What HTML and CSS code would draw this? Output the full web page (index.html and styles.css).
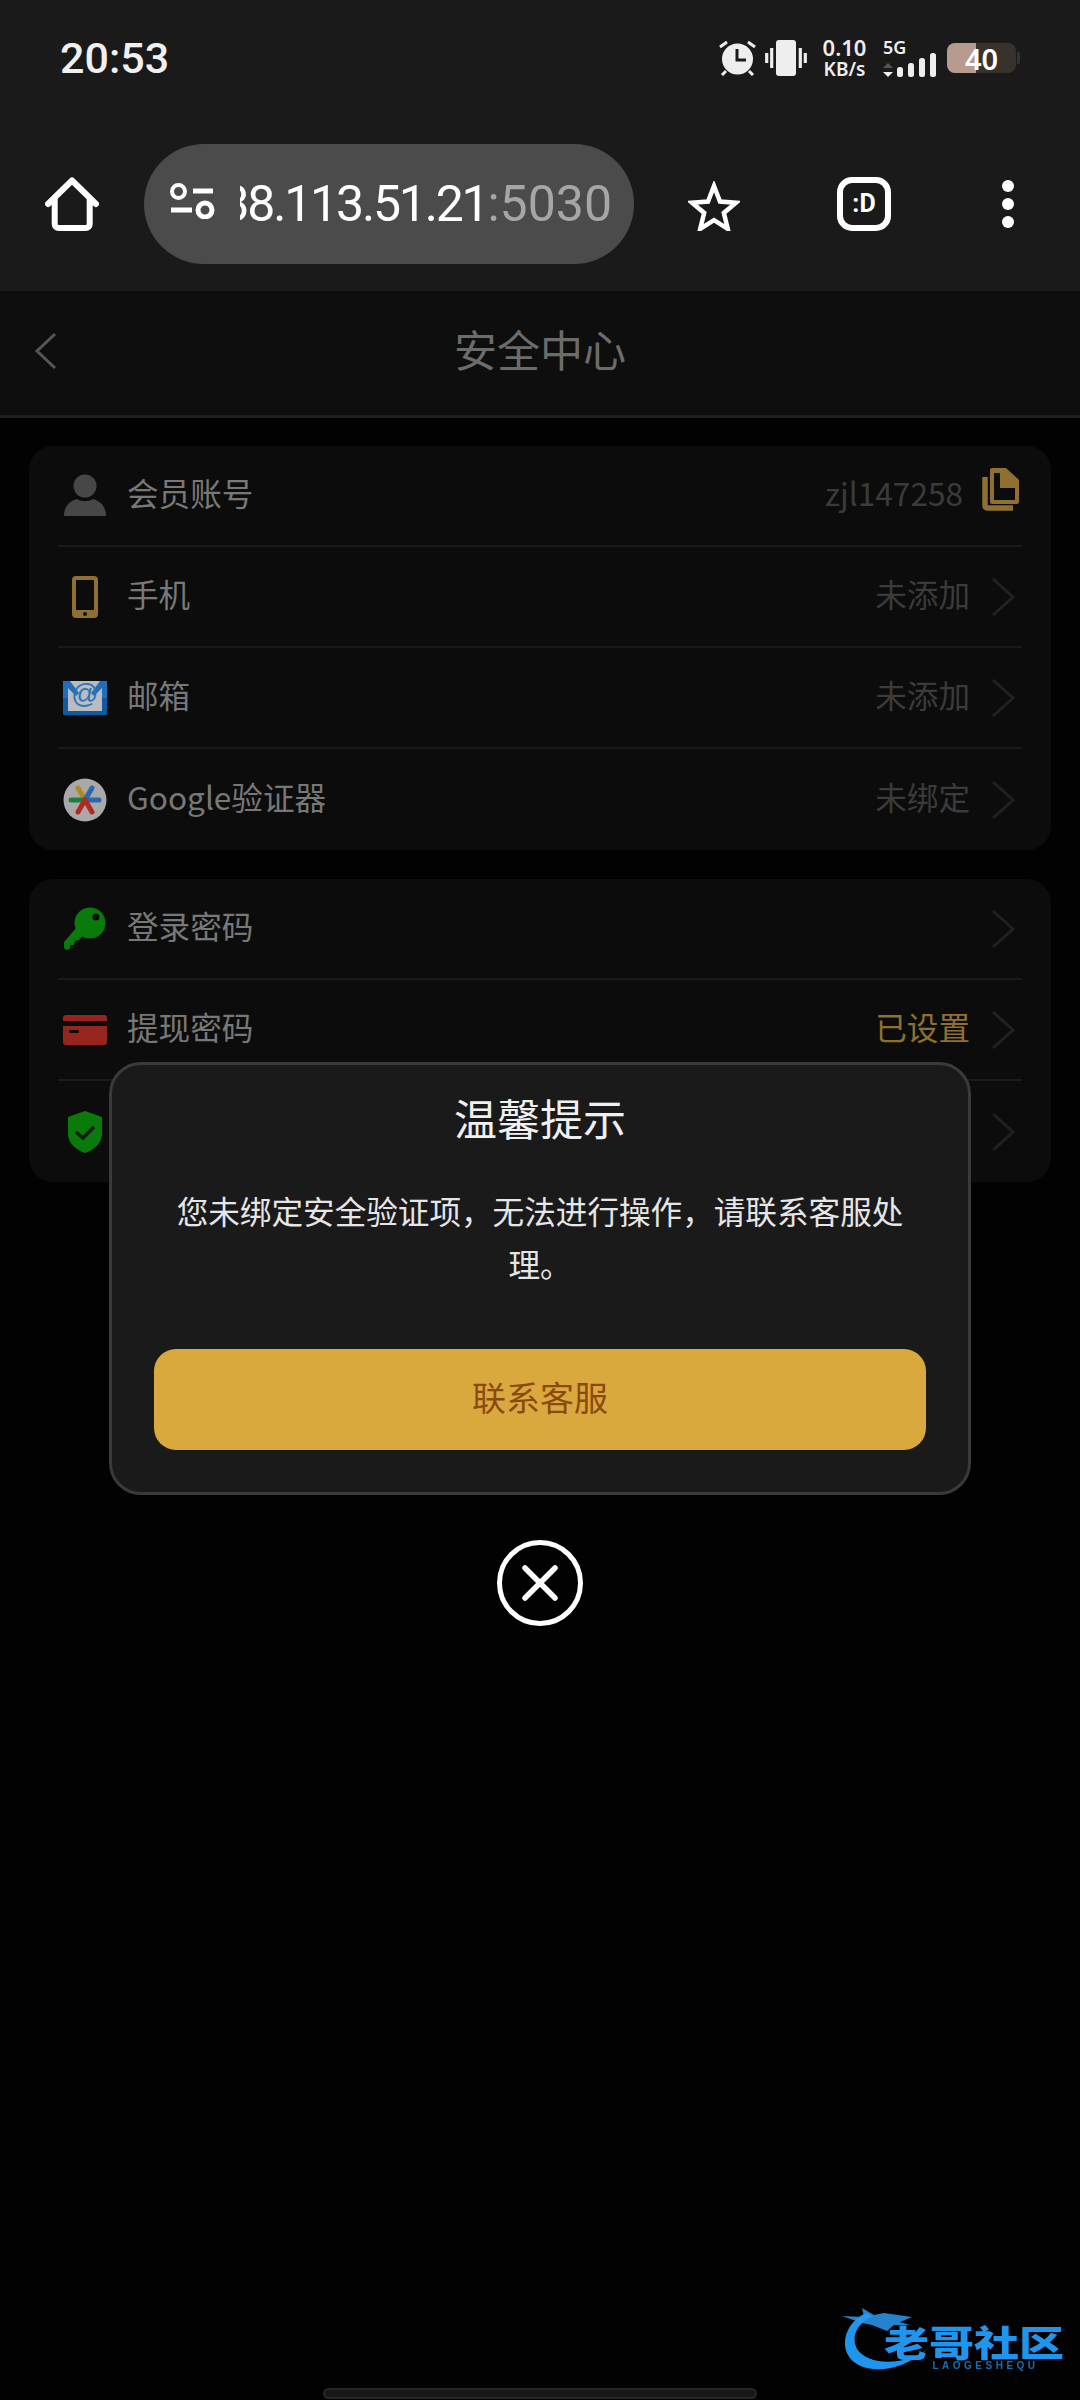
FILE: index.html
```html
<!DOCTYPE html>
<html lang="zh">
<head>
<meta charset="utf-8">
<title>安全中心</title>
<link rel="stylesheet" href="styles.css">
</head>
<body>
<div class="chrome">
  <div class="status">
    <span class="time">20:53</span>
    <div class="status-icons">
      <svg class="ic-alarm" viewBox="0 0 37 36"><circle cx="18.500" cy="19" r="15.500" fill="#eee"/><path d="M18 9v11h9" fill="none" stroke="#1a1a1a" stroke-width="3"/><path d="M1 7l7-5M36 7l-7-5M7 31l-4 4M30 31l4 4" stroke="#eee" stroke-width="3" fill="none"/></svg>
      <svg class="ic-vib" viewBox="0 0 42 36"><rect x="11" y="0" width="20" height="36" rx="3" fill="#eee"/><path d="M1.700 13v10M6.700 8v20M35.300 8v20M40.300 13v10" stroke="#eee" stroke-width="3.200"/></svg>
      <div class="speed"><span class="speed-num">0.10</span><span class="speed-unit">KB/s</span></div>
      <div class="net">
        <span class="fiveg">5G</span>
        <svg class="bars" viewBox="0 0 54 25"><path d="M5 11l5 5H0z" fill="#555"/><path d="M0 20h10l-5 5z" fill="#eee"/><rect x="14" y="15" width="6" height="10" rx="2.500" fill="#eee"/><rect x="25" y="11" width="6" height="14" rx="2.500" fill="#eee"/><rect x="36" y="6" width="6" height="19" rx="2.500" fill="#eee"/><rect x="47" y="1" width="6" height="24" rx="2.500" fill="#eee"/></svg>
      </div>
      <div class="battery"><div class="battery-fill"></div><span class="battery-num">40</span></div>
      <div class="battery-tip"></div>
    </div>
  </div>
  <div class="toolbar">
    <svg class="ic-home" viewBox="0 0 54 54"><path d="M3 27 27 3.500 51 27M9.700 21v26a4 4 0 0 0 4 4h27a4 4 0 0 0 4-4V21" fill="none" stroke="#fff" stroke-width="6" stroke-linejoin="round" stroke-linecap="round"/></svg>
    <div class="pill">
      <svg class="ic-tune" viewBox="0 0 46 36"><circle cx="8.500" cy="8.500" r="6.500" fill="none" stroke="#fff" stroke-width="4"/><path d="M23 8h20M1 27h21" stroke="#fff" stroke-width="5"/><circle cx="35" cy="27" r="7" fill="none" stroke="#fff" stroke-width="5"/></svg>
      <div class="url"><span class="url-host">38.113.51.21</span><span class="url-port">:5030</span></div>
    </div>
    <svg class="ic-star" viewBox="0 0 52 50"><path d="M26 5l6 15.500 16 1.200-12.200 10.200 4 16L26 39.200l-13.800 8.700 4-16L4 21.700l16-1.200z" fill="none" stroke="#fff" stroke-width="4.500" stroke-linejoin="miter"/></svg>
    <div class="tab-count">:D</div>
    <div class="menu-dots"><i></i><i></i><i></i></div>
  </div>
</div>

<main class="page">
  <header class="head">
    <svg class="back" viewBox="0 0 26 40"><path d="M22 3 4 20l18 17" fill="none" stroke="#565656" stroke-width="3"/></svg>
    <h1>安全中心</h1>
  </header>

  <section class="card">
    <div class="row">
      <svg class="ico" viewBox="0 0 44 44"><circle cx="22" cy="12" r="11.500" fill="#474747"/><path d="M1 42c0-10 6-15 13-17 5 3 11 3 16 0 7 2 13 7 13 17z" fill="#474747"/></svg>
      <span class="label">会员账号</span>
      <span class="value">zjl147258</span>
      <svg class="copy" viewBox="0 0 37 44"><path d="M10 1h14l13 12v22a2 2 0 0 1-2 2H10a2 2 0 0 1-2-2V3a2 2 0 0 1 2-2z" fill="#8f7030"/><path d="M12 6h6v15h15v12H12z" fill="#0c0c0c"/><path d="M3 10v29a2 2 0 0 0 2 2h26" fill="none" stroke="#8f7030" stroke-width="5.500"/></svg>
    </div>
    <div class="row">
      <svg class="ico" viewBox="0 0 44 44"><rect x="9" y="1" width="26" height="42" rx="4" fill="#8f7030"/><rect x="13" y="5" width="18" height="30" fill="#0c0c0c"/><circle cx="22" cy="39" r="2" fill="#0c0c0c"/></svg>
      <span class="label">手机</span>
      <span class="value">未添加</span>
      <svg class="chev" viewBox="0 0 24 38"><path d="M2 1l20 18L2 37" fill="none" stroke="#212121" stroke-width="3"/></svg>
    </div>
    <div class="row">
      <svg class="ico" viewBox="0 0 44 44"><rect x="0" y="5" width="44" height="34" rx="1" fill="#0f5aa0"/><path d="M5 5h34v30H5z" fill="#b9bcc0"/><path d="M0 5h7l9 12-3 3L5 12v10H0zM44 5h-7l-9 12 3 3 8-8v10h5z" fill="#1f70b8"/><text x="22" y="27" class="at">@</text></svg>
      <span class="label">邮箱</span>
      <span class="value">未添加</span>
      <svg class="chev" viewBox="0 0 24 38"><path d="M2 1l20 18L2 37" fill="none" stroke="#212121" stroke-width="3"/></svg>
    </div>
    <div class="row">
      <svg class="ico" viewBox="0 0 44 44"><circle cx="22" cy="22" r="21.500" fill="#a9a9a9"/><path d="M22 22 15 10" stroke="#b08a20" stroke-width="5" stroke-linecap="round"/><path d="M22 22l7-12" stroke="#2b68ae" stroke-width="5" stroke-linecap="round"/><path d="M22 22H8" stroke="#1f7f3e" stroke-width="5" stroke-linecap="round"/><path d="M22 22h14" stroke="#2b68ae" stroke-width="5" stroke-linecap="round"/><path d="M22 22l-7 12M22 22l7 12" stroke="#b02a22" stroke-width="5" stroke-linecap="round"/></svg>
      <span class="label">Google验证器</span>
      <span class="value">未绑定</span>
      <svg class="chev" viewBox="0 0 24 38"><path d="M2 1l20 18L2 37" fill="none" stroke="#212121" stroke-width="3"/></svg>
    </div>
  </section>

  <section class="card">
    <div class="row">
      <svg class="ico" viewBox="0 0 44 44"><circle cx="27" cy="16" r="15.500" fill="#0a7a0a"/><path d="M14 20 1 35v6l2 2 4-1 0-4 4 0 1-4 4-1 7-8z" fill="#0a7a0a"/><circle cx="33" cy="10" r="3.500" fill="#0c0c0c"/></svg>
      <span class="label">登录密码</span>
      <svg class="chev" viewBox="0 0 24 38"><path d="M2 1l20 18L2 37" fill="none" stroke="#212121" stroke-width="3"/></svg>
    </div>
    <div class="row">
      <svg class="ico" viewBox="0 0 44 44"><rect x="0" y="7" width="44" height="30" rx="3" fill="#962520"/><rect x="0" y="13" width="44" height="5" fill="#0c0c0c"/><rect x="6" y="22" width="10" height="3" rx="1.500" fill="#0c0c0c"/></svg>
      <span class="label">提现密码</span>
      <span class="value value-set">已设置</span>
      <svg class="chev" viewBox="0 0 24 38"><path d="M2 1l20 18L2 37" fill="none" stroke="#212121" stroke-width="3"/></svg>
    </div>
    <div class="row">
      <svg class="ico" viewBox="0 0 44 44"><path d="M22 1 39 7v17c0 9-8 16-17 19C13 40 5 33 5 24V7z" fill="#0a7a0a"/><path d="M13 22l7 6 11-11" fill="none" stroke="#10220f" stroke-width="3.500"/></svg>
      <span class="label">安全中心</span>
      <svg class="chev" viewBox="0 0 24 38"><path d="M2 1l20 18L2 37" fill="none" stroke="#212121" stroke-width="3"/></svg>
    </div>
  </section>
</main>

<div class="overlay">
  <div class="dialog">
    <h2>温馨提示</h2>
    <p>您未绑定安全验证项，无法进行操作，请联系客服处理。</p>
    <button class="cta">联系客服</button>
  </div>
  <svg class="close" viewBox="0 0 88 88"><circle cx="44" cy="44" r="40.500" fill="none" stroke="#fff" stroke-width="5"/><path d="M29 29l30 30M59 29 29 59" stroke="#fff" stroke-width="5.500" stroke-linecap="round"/></svg>
</div>

<div class="logo">
  <svg class="logo-mark" viewBox="0 0 90 72"><path d="M24 10C6 18-2 38 6 52c8 16 44 24 80-6C60 64 26 62 15 46 9 34 14 22 30 13z" fill="#1f95ee"/><path d="M0 13l22 1-2-9 12 7 10-2 28 4-12 5 10 3H52l-7 6-15-6-10-2z" fill="#2a9af0" opacity=".85"/></svg>
  <div class="logo-text"><span class="logo-cn">老哥社区</span><span class="logo-en">LAOGESHEQU</span></div>
</div>
<div class="home-bar"></div>
</body>
</html>
```
FILE: styles.css
```css
* { box-sizing: border-box; }
html, body { margin: 0; padding: 0; }
body {
  width: 1080px;
  height: 2400px;
  position: relative;
  overflow: hidden;
  background: #020202;
  font-family: "Noto Sans CJK SC", "Noto Sans", sans-serif;
}
.chrome { height: 291px; background: #1a1a1a; display: flex; flex-direction: column; }
.status { height: 116px; display: flex; align-items: center; justify-content: space-between; padding: 0 60px 0 60px; }
.time { font: 500 43px/1 Roboto, sans-serif; color: #f0f0f0; }
.status-icons { display: flex; align-items: center; }
.ic-alarm { width: 37px; height: 36px; margin-right: 9px; }
.ic-vib { width: 42px; height: 36px; margin-right: 16px; }
.speed { display: flex; flex-direction: column; align-items: center; width: 43px; margin-right: 17px; color: #eee; font-family: "Noto Sans", sans-serif; font-weight: 600; }
.speed-num { font-size: 22px; line-height: 23px; }
.speed-unit { font-size: 19px; line-height: 21px; }
.net { position: relative; width: 54px; height: 37px; margin-right: 10px; }
.fiveg { position: absolute; left: 0; top: -3px; font: 600 18px/20px "Noto Sans", sans-serif; color: #eee; }
.bars { position: absolute; left: 0; bottom: 0; width: 54px; height: 25px; }
.battery { position: relative; width: 69px; height: 30px; border-radius: 8px; background: #37332c; overflow: hidden; display: flex; align-items: center; justify-content: center; }
.battery-fill { position: absolute; left: 0; top: 0; bottom: 0; width: 29px; background: #b69b8e; }
.battery-num { position: relative; font: 600 29px/1 "Noto Sans", sans-serif; color: #fff; }
.battery-tip { width: 3px; height: 12px; margin-left: 1px; background: #333; border-radius: 0 2px 2px 0; }
.toolbar { height: 120px; margin-top: 28px; display: flex; align-items: center; padding-left: 45px; }
.ic-home { width: 54px; height: 54px; flex: none; }
.pill { width: 490px; height: 120px; margin-left: 45px; border-radius: 60px; background: #4b4b4b; display: flex; align-items: center; padding: 0 23px 0 26px; flex: none; }
.ic-tune { width: 46px; height: 36px; flex: none; margin-top: -6px; }
.url { width: 372px; flex: none; overflow: hidden; margin-left: 24px; display: flex; justify-content: flex-end; font: 400 50px/60px Roboto, sans-serif; white-space: nowrap; }
.url-host { color: #fff; letter-spacing: -2.2px; }
.url-port { color: #a6a6a6; }
.ic-star { width: 52px; height: 50px; margin: 3px 0 0 54px; flex: none; }
.tab-count { width: 54px; height: 54px; margin-left: 97px; border: 6px solid #fff; border-radius: 15px; color: #fff; font: 700 25px/42px Roboto, sans-serif; text-align: center; flex: none; }
.menu-dots { display: flex; flex-direction: column; gap: 6px; margin-left: 111px; }
.menu-dots i { display: block; width: 12px; height: 12px; border-radius: 50%; background: #fff; }

.head { height: 127px; display: flex; align-items: center; justify-content: center; position: relative; background: #0e0e0e; border-bottom: 3px solid #1d1d1d; padding-bottom: 10px; }
.head h1 { margin: 0; font-size: 43px; font-weight: 400; color: #6c6c6c; }
.back { position: absolute; left: 33px; top: 40px; width: 26px; height: 40px; }
.card { margin: 28px 29px 0; background: #0c0c0c; border-radius: 24px; padding: 0 29px; }
.card + .card { margin-top: 29px; }
.row { height: 101px; display: flex; align-items: center; border-bottom: 2px solid #1a1a1a; }
.row:last-child { border-bottom: 0; }
.ico { width: 44px; height: 44px; margin: 0 20px 0 5px; flex: none; }
.at { font: 400 27px "Liberation Sans", sans-serif; fill: #2f74b8; text-anchor: middle; }
.label { flex: 1; font-size: 31.600px; color: #787878; padding-bottom: 7px; }
.value { font-size: 31.600px; color: #3b3b3b; padding-bottom: 7px; }
.value-set { color: #8f7030; }
.copy { width: 37px; height: 44px; margin: 0 3px 14px 19px; flex: none; }
.chev { width: 24px; height: 38px; margin: 0 7px 0 21px; flex: none; }

.overlay { position: absolute; left: 109px; top: 1062px; width: 862px; display: flex; flex-direction: column; align-items: center; }
.dialog { width: 100%; height: 433px; border: 3px solid #3a3a3a; border-radius: 32px; background: #1a1a1a; padding: 0 42px; text-align: center; }
.dialog h2 { margin: 20px 0 0; font-size: 43px; line-height: 64px; font-weight: 400; color: #f0f0f0; }
.dialog p { margin: 35px 0 0; height: 106px; font-size: 31.600px; line-height: 53px; color: #e6e6e6; padding: 0 10px; }
.cta { display: block; width: 772px; height: 101px; margin: 59px 0 0 0; padding: 0 0 6px; border: 0; border-radius: 22px; background: #d9a93d; color: #8a4a0e; font: 400 34px "Noto Sans CJK SC", sans-serif; }
.close { width: 88px; height: 88px; margin-top: 44px; }

.logo { position: absolute; left: 842px; top: 2303px; width: 222px; height: 72px; filter: blur(0.4px); }
.logo-mark { width: 90px; height: 72px; display: block; }
.logo-text { position: absolute; left: 42px; top: 19px; width: 181px; display: flex; flex-direction: column; align-items: center; }
.logo-cn { font-size: 36px; line-height: 38px; font-weight: 900; color: #1f95ee; transform: scaleX(1.25); white-space: nowrap; }
.logo-en { font: 700 10px/12px "Liberation Sans", sans-serif; letter-spacing: 3.500px; color: #1b6fb0; margin: 0 0 0 22px; }
.home-bar { position: absolute; left: 323px; top: 2388px; width: 434px; height: 11px; border-radius: 6px; background: #181818; border: 2px solid #262626; }
```
